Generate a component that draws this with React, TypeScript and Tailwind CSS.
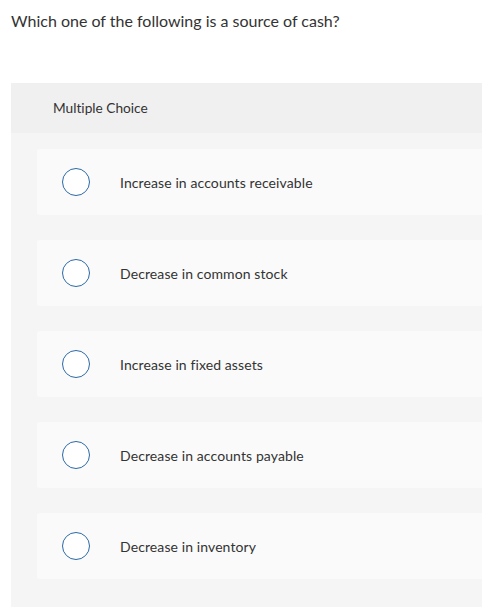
import React from 'react';

const options = [
  'Increase in accounts receivable',
  'Decrease in common stock',
  'Increase in fixed assets',
  'Decrease in accounts payable',
  'Decrease in inventory',
];

const App = () => {
  return (
    <div className="w-[482px] h-[607px] overflow-hidden bg-white text-[#333] font-['Lato',sans-serif] [font-variant-ligatures:none]">
      {/* Question */}
      <p className="pl-[11px] pt-[11px] text-[16px] leading-[20px]">Which one of the following is a source of cash?</p>

      {/* Answer panel */}
      <div className="ml-[11px] mt-[52px] w-[490px] bg-[#f5f5f5] pb-[40px]">
        <div className="h-[50px] bg-[#f0f0f0] pl-[42px] pt-px flex items-center text-[13.7px]">Multiple Choice</div>
        <div className="flex flex-col gap-[25px] pt-[16px] pl-[26px]">
          {options.map((o) => (
            <div key={o} className="h-[66px] bg-[#fafafa] rounded-[3px] flex items-center">
              <span className="ml-[25px] w-[28px] h-[28px] rounded-full border border-[#2b69a6] bg-white shrink-0" />
              <span className="ml-[30px] text-[14px] tracking-[0.1px]">{o}</span>
            </div>
          ))}
        </div>
      </div>
    </div>
  );
};

export default App;
